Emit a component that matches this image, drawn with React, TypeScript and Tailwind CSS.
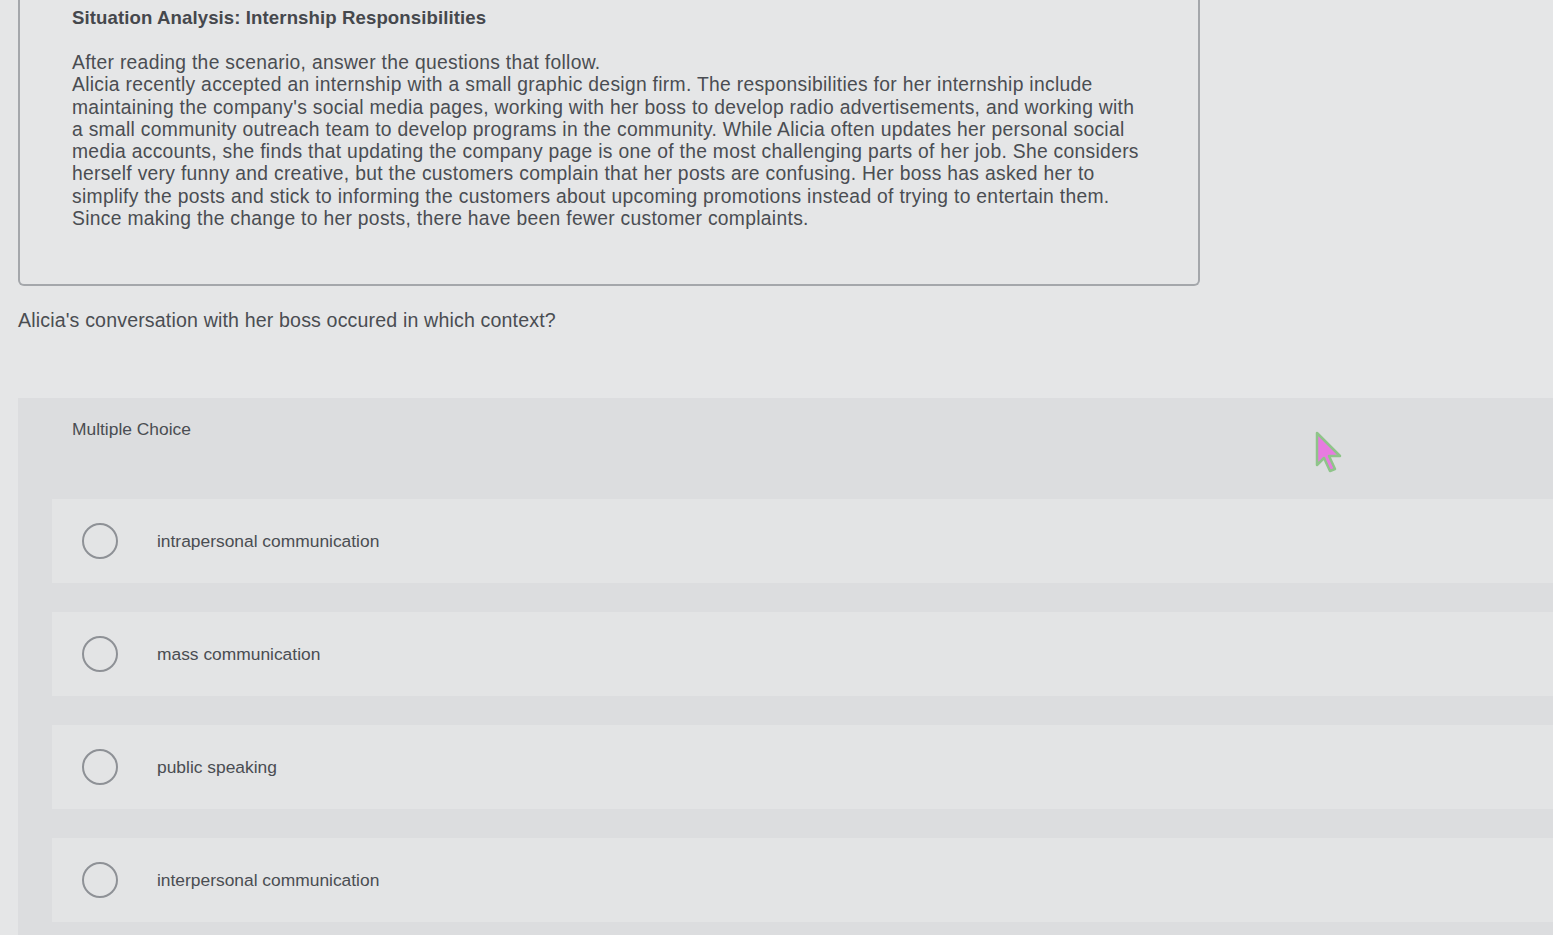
import React from "react";

const lines = [
  "After reading the scenario, answer the questions that follow.",
  "Alicia recently accepted an internship with a small graphic design firm. The responsibilities for her internship include",
  "maintaining the company's social media pages, working with her boss to develop radio advertisements, and working with",
  "a small community outreach team to develop programs in the community. While Alicia often updates her personal social",
  "media accounts, she finds that updating the company page is one of the most challenging parts of her job. She considers",
  "herself very funny and creative, but the customers complain that her posts are confusing. Her boss has asked her to",
  "simplify the posts and stick to informing the customers about upcoming promotions instead of trying to entertain them.",
  "Since making the change to her posts, there have been fewer customer complaints.",
];

const choices = [
  "intrapersonal communication",
  "mass communication",
  "public speaking",
  "interpersonal communication",
];

export default function App() {
  return (
    <div className="relative min-h-[935px] bg-[#e5e6e7] text-[#4a4d52] overflow-hidden" style={{ fontFamily: '"Liberation Sans", Arial, sans-serif' }}>
      <div className="ml-[18px] w-[1182px] h-[286px] border-x-2 border-b-2 border-[#a4a7ab] rounded-b-[6px] pl-[52px] pt-[6px]">
        <h1 className="text-[18.6px] leading-[24px] font-bold text-[#45484d] tracking-[0.1px]">Situation Analysis: Internship Responsibilities</h1>
        <div className="mt-[22px] text-[19.3px] leading-[22.3px] tracking-[0.3px] whitespace-nowrap">
          {lines.map((l) => <div key={l}>{l}</div>)}
        </div>
      </div>

      <p className="mt-[22px] ml-[18px] text-[19.6px] leading-[24px] tracking-[0.15px]">Alicia's conversation with her boss occured in which context?</p>

      <div className="mt-[66px] ml-[18px] bg-[#dcdddf] pb-[20px]">
        <div className="pl-[54px] pt-[20px] h-[101px] text-[17.4px] leading-[22px]">Multiple Choice</div>
        <div className="ml-[34px] flex flex-col gap-[29px]">
          {choices.map((c) => (
            <div key={c} className="h-[84px] bg-[#e3e4e5] flex items-center pl-[30px]">
              <span className="w-[36px] h-[36px] rounded-full border-2 border-[#8e9196] shrink-0" />
              <span className="ml-[39px] text-[17.4px]">{c}</span>
            </div>
          ))}
        </div>
      </div>

      <svg className="absolute left-[1314px] top-[431px]" width="30" height="44" viewBox="0 0 30 44">
        <path d="M3 2 L3 34 L10 27 L16 40 L21 38 L15 25 L26 25 Z" fill="#e77be0" stroke="#8fc48a" strokeWidth="2.5" strokeLinejoin="round" />
      </svg>
    </div>
  );
}
